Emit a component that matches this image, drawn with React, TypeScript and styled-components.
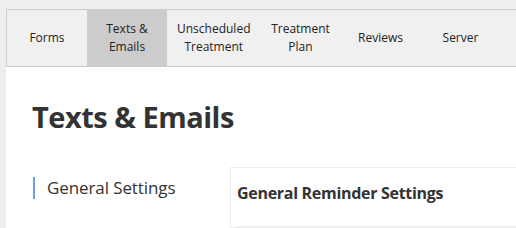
import * as React from 'react';
import styled, { createGlobalStyle } from 'styled-components';

const GlobalStyle = createGlobalStyle`
  html, body {
    margin: 0;
    padding: 0;
    background: #eeeeee;
    font-family: "Segoe UI", "Open Sans", "Noto Sans", sans-serif;
    color: #333;
  }
`;

const tabs = ['Forms', 'Texts & Emails', 'Unscheduled Treatment', 'Treatment Plan', 'Reviews', 'Server'];
const activeTab = 'Texts & Emails';

const Page = styled.div`
  padding: 9px 0 0 6px;
  height: 228px;
  box-sizing: border-box;
  overflow: hidden;
`;

const Shell = styled.div`
  background: #fff;
  height: 100%;
`;

const TabBar = styled.nav`
  display: flex;
  height: 56px;
  background: #f0f0f0;
  border: 1px solid #cccccc;
  border-right: none;
`;

const Tab = styled.div<{ $active?: boolean }>`
  display: flex;
  align-items: center;
  justify-content: center;
  min-width: 80px;
  padding: 0 10px;
  box-sizing: border-box;
  text-align: center;
  font-size: 12px;
  line-height: 18px;
  color: #222;
  background: ${(p) => (p.$active ? '#cccccc' : 'transparent')};
  white-space: pre-line;
  cursor: pointer;
`;

const Content = styled.main`
  padding: 0 0 0 26px;
`;

const Heading = styled.h1`
  margin: 0;
  padding: 30px 0 0;
  font-size: 29px;
  line-height: 40px;
  letter-spacing: -0.5px;
  font-weight: 700;
  color: #333;
`;

const Body = styled.div`
  display: grid;
  grid-template-columns: 198px 1fr;
  margin-top: 30px;
`;

const SideNav = styled.div`
  padding-top: 10px;
`;

const SideItem = styled.div`
  position: relative;
  padding-left: 14px;
  margin-left: 1px;
  font-size: 17px;
  line-height: 22px;
  letter-spacing: -0.1px;
  color: #333;

  &::before {
    content: '';
    position: absolute;
    left: 0;
    top: 0;
    bottom: 0;
    width: 2px;
    background: linear-gradient(to right, #dd7b82 50%, #62a5e2 50%);
  }
`;

const Card = styled.section`
  border: 1px solid #eeeeee;
  border-right: none;
  padding: 0 0 0 6px;
`;

const CardTitle = styled.h2`
  margin: 0;
  padding: 14px 0 22px;
  font-size: 16px;
  line-height: 22px;
  letter-spacing: -0.3px;
  font-weight: 700;
  color: #333;
  border-bottom: 1px solid #eeeeee;
`;

const labelFor = (t: string) =>
  t === 'Texts & Emails' ? 'Texts &\nEmails'
    : t === 'Unscheduled Treatment' ? 'Unscheduled\nTreatment'
    : t === 'Treatment Plan' ? 'Treatment\nPlan'
    : t;

export default function App() {
  return (
    <Page>
      <GlobalStyle />
      <Shell>
        <TabBar>
          {tabs.map((t) => (
            <Tab key={t} $active={t === activeTab}>{labelFor(t)}</Tab>
          ))}
        </TabBar>
        <Content>
          <Heading>Texts &amp; Emails</Heading>
          <Body>
            <SideNav>
              <SideItem>General Settings</SideItem>
            </SideNav>
            <Card>
              <CardTitle>General Reminder Settings</CardTitle>
            </Card>
          </Body>
        </Content>
      </Shell>
    </Page>
  );
}
